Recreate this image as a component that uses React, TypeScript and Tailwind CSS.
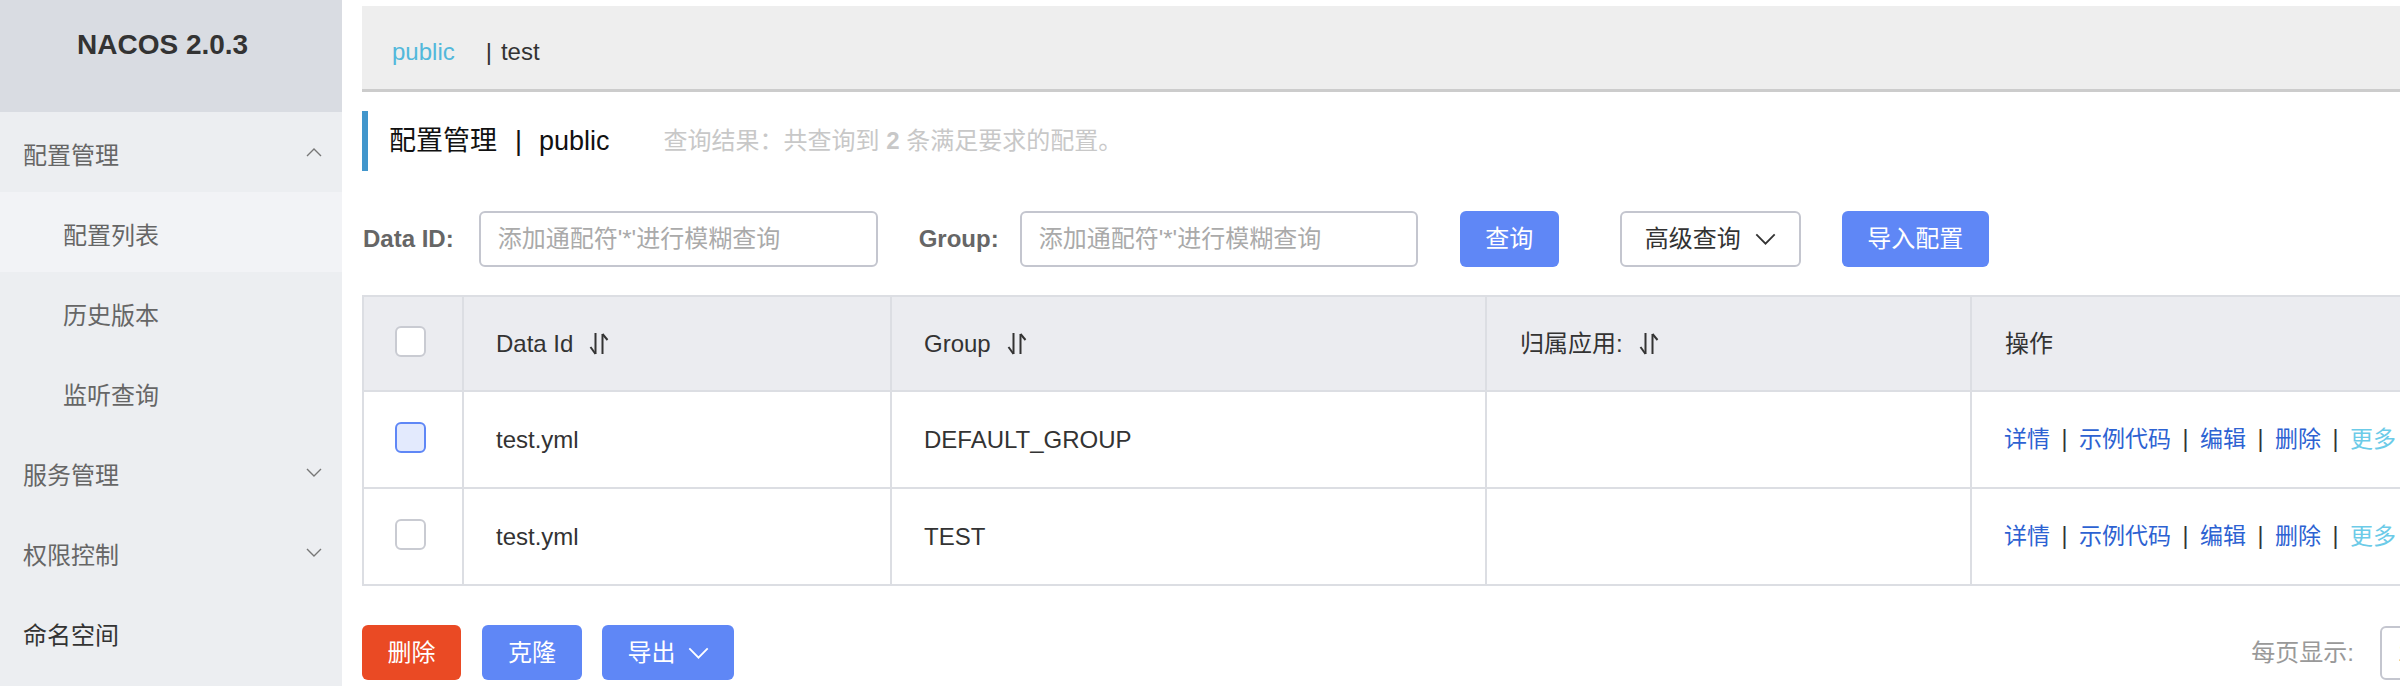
import React from 'react'

const font = "font-['Liberation_Sans','Noto_Sans_CJK_SC',sans-serif]"

function Chevron({ up = false, className = '' }: { up?: boolean; className?: string }) {
  return (
    <svg viewBox="0 0 16 9" className={className} fill="none" stroke="currentColor" strokeWidth="1.4">
      {up ? <polyline points="1,8 8,1 15,8" /> : <polyline points="1,1 8,8 15,1" />}
    </svg>
  )
}

function SortIcon() {
  return (
    <svg viewBox="0 0 24 24" className="ml-[14px] h-[24px] w-[24px] text-[#333]" fill="none" stroke="currentColor" strokeWidth="2">
      <line x1="8.5" y1="1" x2="8.5" y2="22" />
      <line x1="8.5" y1="22" x2="3.5" y2="15" />
      <line x1="15.5" y1="22" x2="15.5" y2="2" />
      <line x1="15.5" y1="2" x2="20.5" y2="8" />
    </svg>
  )
}

function Checkbox({ active = false }: { active?: boolean }) {
  return (
    <div
      className={`h-[31px] w-[31px] rounded-[6px] border-2 ${
        active ? 'border-[#5f87f6] bg-[#e3eafd]' : 'border-[#c9cbd2] bg-white'
      }`}
    />
  )
}

const menu = [
  { label: '配置管理', chevron: 'up' },
  { label: '配置列表', sub: true, active: true },
  { label: '历史版本', sub: true },
  { label: '监听查询', sub: true },
  { label: '服务管理', chevron: 'down' },
  { label: '权限控制', chevron: 'down' },
  { label: '命名空间', dark: true },
]

const rows = [
  { id: 'test.yml', group: 'DEFAULT_GROUP', active: true },
  { id: 'test.yml', group: 'TEST' },
]

const actions = ['详情', '示例代码', '编辑', '删除']

export default function App() {
  return (
    <div className={`flex h-[686px] w-[2400px] overflow-hidden bg-white ${font}`}>
      {/* sidebar */}
      <aside className="h-full w-[342px] shrink-0 bg-[#eceef1]">
        <div className="h-[112px] bg-[#d9dce2] pl-[77px] pt-[24px] text-[28px] font-bold text-[#333]">NACOS 2.0.3</div>
        {menu.map((m) => (
          <div
            key={m.label}
            className={`flex h-[80px] items-center justify-between pr-[20px] text-[24px] ${
              m.sub ? 'pl-[63px]' : 'pl-[23px]'
            } ${m.active ? 'bg-[#f2f3f6]' : ''} ${m.dark ? 'text-[#333]' : 'text-[#666]'}`}
          >
            <span className="pt-[8px]">{m.label}</span>
            {m.chevron && <Chevron up={m.chevron === 'up'} className="h-[9px] w-[16px] text-[#777]" />}
          </div>
        ))}
      </aside>

      {/* main */}
      <main className="flex-1 pl-[20px] pt-[6px]">
        <div className="w-[2138px]">
          <div className="flex h-[86px] items-center border-b-[3px] border-[#cccccc] bg-[#eeeeee] pl-[30px] pt-[8px] text-[24px]">
            <span className="text-[#52b8db]">public</span>
            <span className="ml-[31px] text-[#333]">|</span>
            <span className="ml-[9px] text-[#333]">test</span>
          </div>

          <div className="mt-[19px] flex h-[60px] items-center border-l-[6px] border-[#4196cc] pl-[21px]">
            <span className="text-[27px] text-[#111]">配置管理</span>
            <span className="ml-[18px] mr-[17px] text-[27px] text-[#111]">|</span>
            <span className="text-[27px] text-[#111]">public</span>
            <span className="ml-[54px] text-[24px] text-[#c8c8c8]">
              查询结果：共查询到 <b className="font-bold">2</b> 条满足要求的配置。
            </span>
          </div>

          <div className="mt-[40px] flex h-[56px] items-center text-[24px]">
            <span className="ml-[1px] font-bold text-[#666]">Data ID:</span>
            <div className="ml-[25px] flex h-[56px] w-[399px] items-center rounded-[6px] border-2 border-[#c4c6cf] pl-[17px] text-[#aaa]">
              添加通配符'*'进行模糊查询
            </div>
            <span className="ml-[41px] font-bold text-[#666]">Group:</span>
            <div className="ml-[21px] flex h-[56px] w-[398px] items-center rounded-[6px] border-2 border-[#c4c6cf] pl-[17px] text-[#aaa]">
              添加通配符'*'进行模糊查询
            </div>
            <button className="ml-[42px] flex h-[56px] w-[99px] items-center justify-center rounded-[6px] bg-[#5f87f6] text-white">
              查询
            </button>
            <button className="ml-[61px] flex h-[56px] w-[181px] items-center justify-center rounded-[6px] border-2 border-[#c4c6cf] bg-white text-[#333]">
              高级查询
              <Chevron className="ml-[14px] h-[12px] w-[21px] text-[#333]" />
            </button>
            <button className="ml-[41px] flex h-[56px] w-[147px] items-center justify-center rounded-[6px] bg-[#5f87f6] text-white">
              导入配置
            </button>
          </div>

          {/* table */}
          <div className="mt-[28px] border-2 border-b-0 border-[#dcdee3] text-[24px] text-[#333]">
            <div className="flex h-[95px] border-b-2 border-[#dcdee3] bg-[#ebecf0]">
              <div className="flex w-[100px] items-center border-r-2 border-[#dcdee3] pb-[4px] pl-[31px]">
                <Checkbox />
              </div>
              <div className="flex w-[428px] items-center border-r-2 border-[#dcdee3] pl-[32px]">
                Data Id
                <SortIcon />
              </div>
              <div className="flex w-[595px] items-center border-r-2 border-[#dcdee3] pl-[32px]">
                Group
                <SortIcon />
              </div>
              <div className="flex w-[485px] items-center border-r-2 border-[#dcdee3] pl-[33px]">
                归属应用:
                <SortIcon />
              </div>
              <div className="flex flex-1 items-center pl-[33px]">操作</div>
            </div>
            {rows.map((r, i) => (
              <div key={i} className="flex h-[97px] border-b-2 border-[#dcdee3]">
                <div className="flex w-[100px] items-center border-r-2 border-[#dcdee3] pb-[5px] pl-[31px]">
                  <Checkbox active={r.active} />
                </div>
                <div className="flex w-[428px] items-center border-r-2 border-[#dcdee3] pl-[32px]">{r.id}</div>
                <div className="flex w-[595px] items-center border-r-2 border-[#dcdee3] pl-[32px]">{r.group}</div>
                <div className="w-[485px] border-r-2 border-[#dcdee3]" />
                <div className="flex flex-1 items-center pl-[32px] text-[23px]">
                  {actions.map((a) => (
                    <React.Fragment key={a}>
                      <span className="text-[#2d62d2]">{a}</span>
                      <span className="inline-block w-[29px] text-center text-[#333]">|</span>
                    </React.Fragment>
                  ))}
                  <span className="text-[#6ccbe8]">更多</span>
                </div>
              </div>
            ))}
          </div>

          <div className="mt-[39px] flex h-[55px] items-center text-[24px]">
            <button className="flex h-[55px] w-[99px] items-center justify-center rounded-[6px] bg-[#ea4a24] text-white">删除</button>
            <button className="ml-[21px] flex h-[55px] w-[100px] items-center justify-center rounded-[6px] bg-[#5f87f6] text-white">克隆</button>
            <button className="ml-[20px] flex h-[55px] w-[132px] items-center justify-center rounded-[6px] bg-[#5f87f6] text-white">
              导出
              <Chevron className="ml-[12px] h-[12px] w-[21px] text-white" />
            </button>
            <div className="flex-1" />
            <span className="text-[#999]">每页显示:</span>
            <div className="ml-[26px] flex h-[54px] w-[120px] items-center rounded-[6px] border-2 border-[#c4c6cf] pl-[16px] text-[#333]">
              10
            </div>
          </div>
        </div>
      </main>
    </div>
  )
}
